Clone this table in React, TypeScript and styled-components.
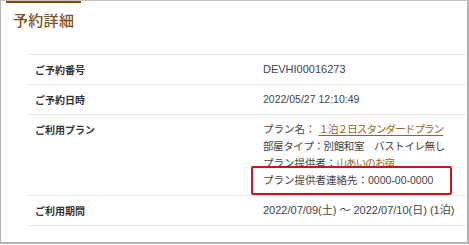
import styled, { createGlobalStyle } from "styled-components";

const GlobalStyle = createGlobalStyle`
  html, body {
    margin: 0;
    padding: 0;
    background: #ffffff;
  }
  body {
    font-family: "Liberation Sans", "Noto Sans CJK JP", sans-serif;
  }
`;

const Frame = styled.div`
  position: relative;
  box-sizing: border-box;
  width: 469px;
  height: 244px;
  border: 1px solid #b4b4b4;
  border-top: 1px solid #c9c2b6;
  border-right-width: 2px;
  border-bottom-width: 2px;
  overflow: hidden;
`;

const TopAccent = styled.div`
  position: absolute;
  top: 0;
  left: 5px;
  width: 75px;
  height: 2px;
  background: #7a4a12;
`;

const Title = styled.h1`
  margin: 0;
  padding: 9px 0 0 12px;
  height: 44px;
  box-sizing: border-box;
  font-family: "Noto Sans CJK JP", serif;
  font-size: 15px;
  font-weight: 500;
  line-height: 20px;
  letter-spacing: 0.3px;
  color: #7d5220;
`;

const Table = styled.div`
  margin: 9px 0 0 26px;
  border-top: 1px solid #e9e9e9;
`;

const Row = styled.div`
  display: grid;
  grid-template-columns: 236px 1fr;
  padding: 6px 0;
  border-bottom: 1px solid #e9e9e9;
  line-height: 17px;
`;

const Label = styled.div`
  padding-left: 8px;
  font-family: "Noto Sans CJK JP", sans-serif;
  font-size: 10px;
  font-weight: 700;
  color: #333333;
`;

const Value = styled.div<{ $size?: number }>`
  font-size: ${(p) => p.$size ?? 10.5}px;
  color: #444444;
  white-space: nowrap;
`;

const Line = styled.div<{ $tight?: boolean }>`
  height: 17px;
  letter-spacing: ${(p) => (p.$tight ? "-0.4px" : "0")};
`;

const Link = styled.span`
  color: #94662a;
  text-decoration: underline;
  text-underline-offset: 2px;
  letter-spacing: -0.9px;
`;

const Highlight = styled.div`
  position: relative;
  height: 17px;

  &::before {
    content: "";
    position: absolute;
    top: -6px;
    left: -12px;
    width: 201px;
    height: 29px;
    box-sizing: border-box;
    border: 2px solid #c8161d;
    border-radius: 2px;
    background: #ffffff;
  }
`;

const HighlightText = styled.span`
  position: relative;
  z-index: 1;
`;

export default function App() {
  return (
    <>
      <GlobalStyle />
      <Frame>
        <TopAccent />
        <Title>予約詳細</Title>
        <Table>
          <Row>
            <Label>ご予約番号</Label>
            <Value $size={11}>DEVHI00016273</Value>
          </Row>
          <Row>
            <Label>ご予約日時</Label>
            <Value>2022/05/27 12:10:49</Value>
          </Row>
          <Row>
            <Label>ご利用プラン</Label>
            <Value>
              <Line>
                プラン名： <Link>１泊２日スタンダードプラン</Link>
              </Line>
              <Line $tight>部屋タイプ：別館和室　バストイレ無し</Line>
              <Line>
                プラン提供者：<Link>山あいのお宿</Link>
              </Line>
              <Highlight>
                <HighlightText>プラン提供者連絡先：0000-00-0000</HighlightText>
              </Highlight>
            </Value>
          </Row>
          <Row>
            <Label>ご利用期間</Label>
            <Value $size={11}>2022/07/09(土) ～ 2022/07/10(日) (1泊)</Value>
          </Row>
        </Table>
      </Frame>
    </>
  );
}
